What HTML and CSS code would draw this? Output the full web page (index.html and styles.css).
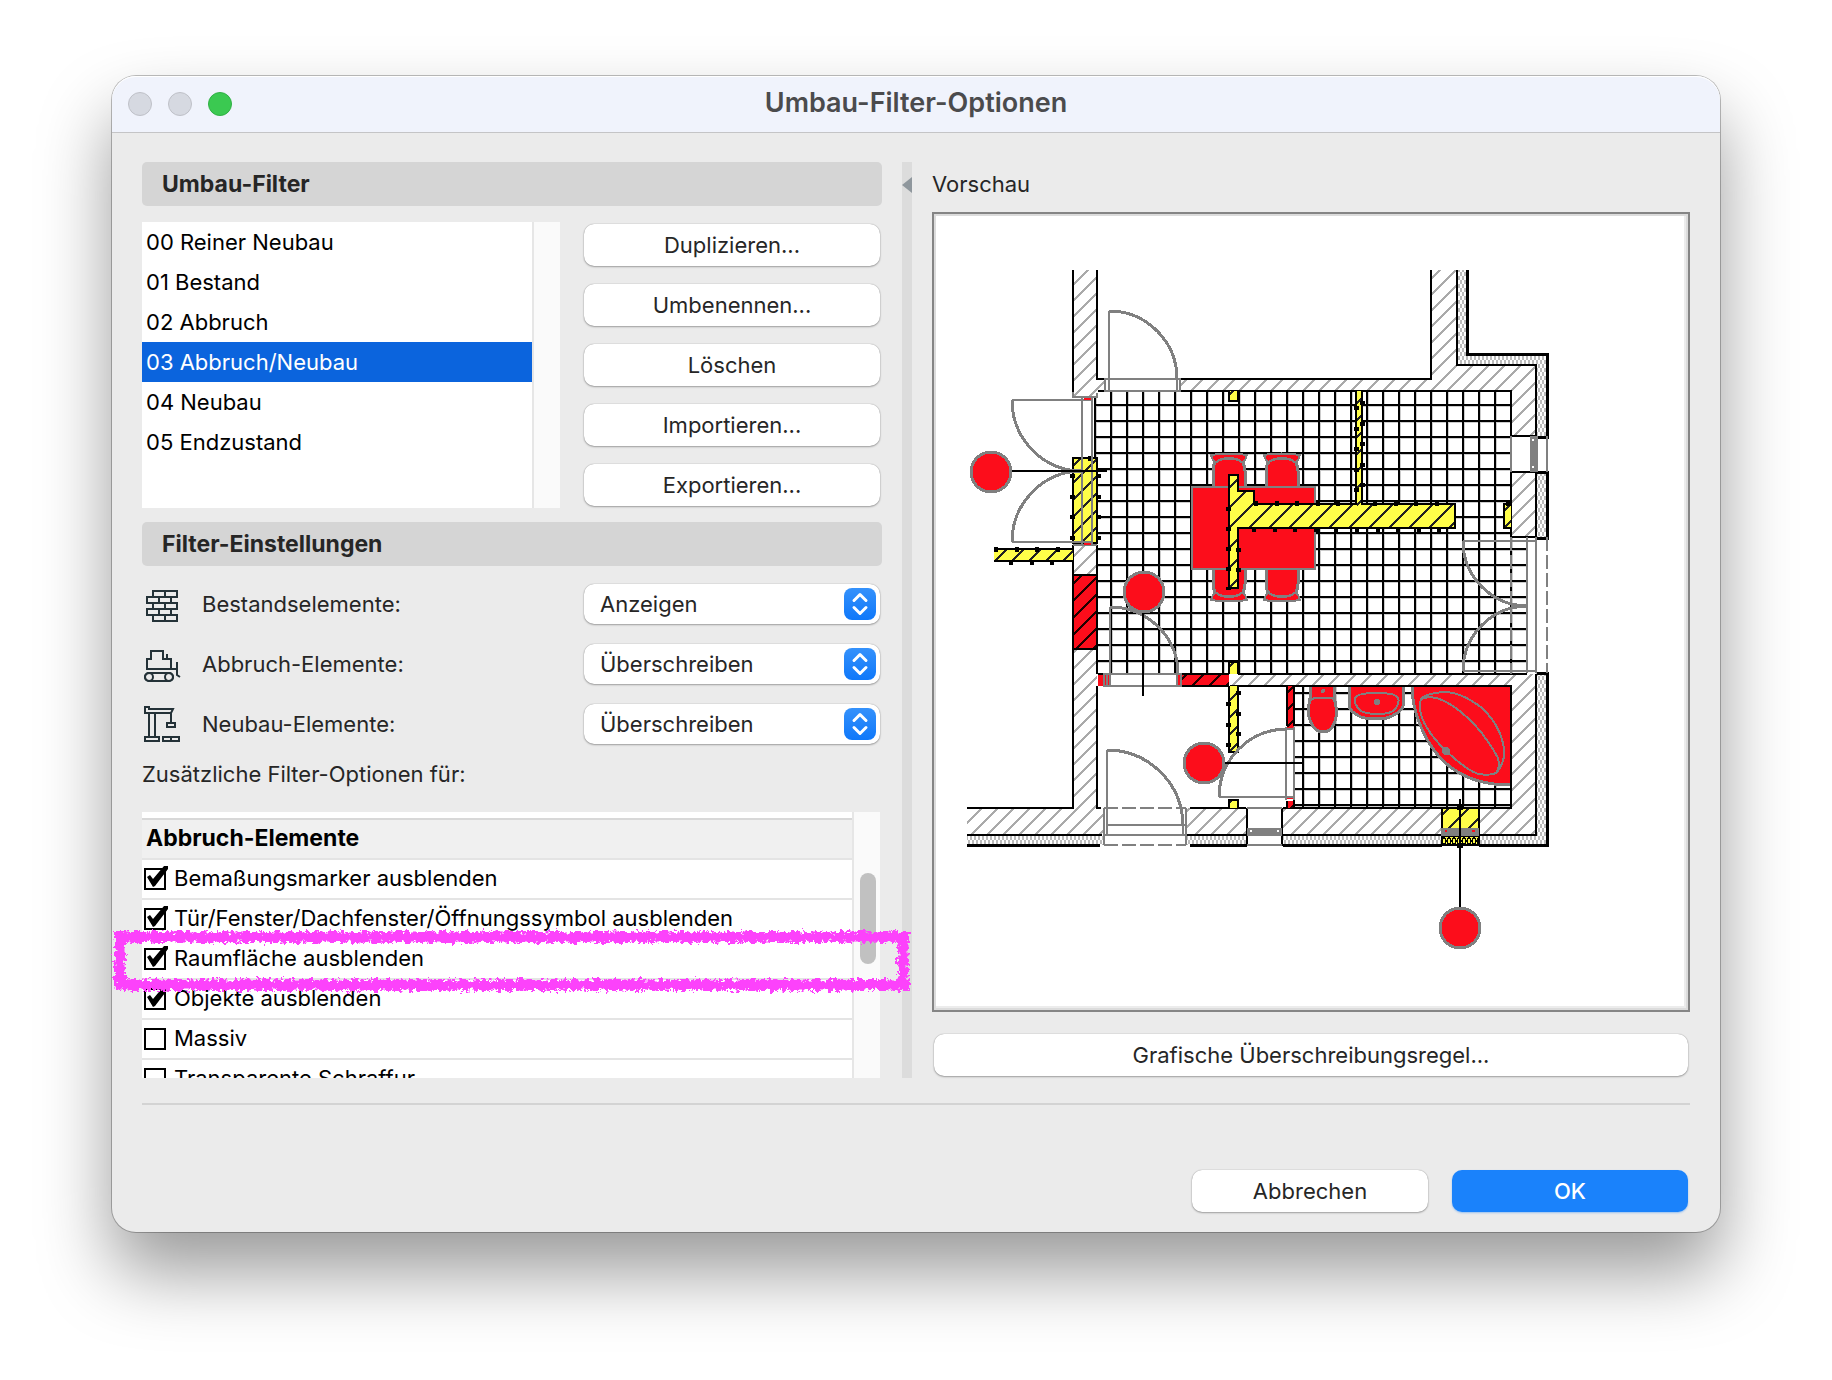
FILE: index.html
```
<!DOCTYPE html>
<html lang="de">
<head>
<meta charset="utf-8">
<meta name="viewport" content="width=device-width, initial-scale=1">
<title>Umbau-Filter-Optionen</title>
<link rel="stylesheet" href="styles.css">
</head>
<body>
<main class="window">
  <header class="titlebar">
    <div class="lights"><span class="light"></span><span class="light"></span><span class="light light-zoom"></span></div>
    <h1 class="title">Umbau-Filter-Optionen</h1>
  </header>
  <div class="content">
    <section class="settings">
      <h2 class="section-head">Umbau-Filter</h2>
      <div class="filters">
        <div class="list-frame">
          <ul class="filter-list" role="listbox" aria-label="Umbau-Filter">
            <li role="option">00 Reiner Neubau</li>
            <li role="option">01 Bestand</li>
            <li role="option">02 Abbruch</li>
            <li role="option" class="selected" aria-selected="true">03 Abbruch/Neubau</li>
            <li role="option">04 Neubau</li>
            <li role="option">05 Endzustand</li>
          </ul>
          <div class="track"></div>
        </div>
        <div class="actions">
          <button class="btn" type="button">Duplizieren...</button>
          <button class="btn" type="button">Umbenennen...</button>
          <button class="btn" type="button">Löschen</button>
          <button class="btn" type="button">Importieren...</button>
          <button class="btn" type="button">Exportieren...</button>
        </div>
      </div>
      <h2 class="section-head">Filter-Einstellungen</h2>
      <div class="rows">
        <div class="row">
          <svg class="icon" viewBox="0 0 36 40" aria-hidden="true"><path d="M9 7H33V13H9ZM3 13H27V19H3ZM9 19H33V25H9ZM3 25H27V31H3ZM9 31H33V37H9ZM21 7V13M15 13V19M21 19V25M15 25V31M21 31V37"/></svg>
          <label for="bestand">Bestandselemente:</label>
          <div class="popup">
            <select id="bestand"><option>Anzeigen</option><option>Überschreiben</option></select>
            <svg class="arrows" viewBox="0 0 32 32" aria-hidden="true"><path d="M10 12.500L16 6.500L22 12.500M10 19.500L16 25.500L22 19.500"/></svg>
          </div>
        </div>
        <div class="row">
          <svg class="icon" viewBox="0 0 36 40" aria-hidden="true"><path d="M3 25V15H7V7H19V15H27V25M23 15V10M2 25H33M33 18V31L36 33"/><rect x="1" y="29" width="28" height="8" rx="4"/><circle cx="5" cy="33" r="4"/><circle cx="25" cy="33" r="4"/></svg>
          <label for="abbruch">Abbruch-Elemente:</label>
          <div class="popup">
            <select id="abbruch"><option>Überschreiben</option><option>Anzeigen</option></select>
            <svg class="arrows" viewBox="0 0 32 32" aria-hidden="true"><path d="M10 12.500L16 6.500L22 12.500M10 19.500L16 25.500L22 19.500"/></svg>
          </div>
        </div>
        <div class="row">
          <svg class="icon" viewBox="0 0 36 40" aria-hidden="true"><path d="M1 3H5V5H29L27 9H1ZM5 9V33M11 9V33M1 33H15V37H1ZM27 9V19M23 19H31V23H23ZM19 33H35V37H19ZM27 33V37"/></svg>
          <label for="neubau">Neubau-Elemente:</label>
          <div class="popup">
            <select id="neubau"><option>Überschreiben</option><option>Anzeigen</option></select>
            <svg class="arrows" viewBox="0 0 32 32" aria-hidden="true"><path d="M10 12.500L16 6.500L22 12.500M10 19.500L16 25.500L22 19.500"/></svg>
          </div>
        </div>
      </div>
      <p class="extra">Zusätzliche Filter-Optionen für:</p>
      <div class="options">
        <div class="options-frame">
          <div class="option-list">
            <h3 class="group">Abbruch-Elemente</h3>
            <label class="option"><input type="checkbox" checked>Bemaßungsmarker ausblenden</label>
            <label class="option"><input type="checkbox" checked>Tür/Fenster/Dachfenster/Öffnungssymbol ausblenden</label>
            <label class="option"><input type="checkbox" checked>Raumfläche ausblenden</label>
            <label class="option"><input type="checkbox" checked>Objekte ausblenden</label>
            <label class="option"><input type="checkbox">Massiv</label>
            <label class="option"><input type="checkbox">Transparente Schraffur</label>
          </div>
          <div class="track"><div class="thumb"></div></div>
        </div>
        <svg class="marker" aria-hidden="true">
          <defs>
            <filter id="chalk" x="-2%" y="-20%" width="104%" height="140%">
              <feTurbulence type="fractalNoise" baseFrequency="0.26" numOctaves="3" seed="4" result="n"/>
              <feDisplacementMap in="SourceGraphic" in2="n" scale="9" xChannelSelector="R" yChannelSelector="G"/>
            </filter>
          </defs>
          <g filter="url(#chalk)">
            <rect class="marker-line" x="11" y="11" width="783" height="48"/>
            <rect class="marker-grain" x="11" y="11" width="783" height="48"/>
          </g>
        </svg>
      </div>
    </section>
    <div class="splitter"><span class="collapse"></span></div>
    <section class="preview">
      <h2 class="preview-label">Vorschau</h2>
      <div class="canvas">
        <svg class="plan" viewBox="934 214 754 796" role="img" aria-label="Grundriss">
          <defs>
            <pattern id="tiles" x="1110" y="404" width="16" height="16" patternUnits="userSpaceOnUse"><path d="M0 0H16V2H0ZM0 0H2V16H0Z" fill="#000"/><path d="M2 2H16V3H3V16H2Z" fill="#ccc"/></pattern>
            <pattern id="hatch" x="1095" y="391" width="16" height="16" patternUnits="userSpaceOnUse"><rect width="16" height="16" fill="#fff"/><path d="M-2 18L18 -2M-2 2L2 -2M14 18L18 14" stroke="#aaa" stroke-width="1.500" fill="none"/></pattern>
            <pattern id="hatch-y" x="1233" y="504" width="20" height="20" patternUnits="userSpaceOnUse"><rect width="20" height="20" fill="#fffe49"/><path d="M-2 22L22 -2M-2 2L2 -2M18 22L22 18" stroke="#222" stroke-width="2" fill="none"/></pattern>
            <pattern id="hatch-yn" x="1229" y="480" width="17" height="17" patternUnits="userSpaceOnUse"><rect width="17" height="17" fill="#fffe49"/><path d="M-2 19L19 -2M-2 2L2 -2M15 19L19 15" stroke="#222" stroke-width="1.500" fill="none"/></pattern>
            <pattern id="hatch-r" x="1073" y="584" width="17" height="17" patternUnits="userSpaceOnUse"><rect width="17" height="17" fill="#fc0d1b"/><path d="M-2 19L19 -2M-2 2L2 -2M15 19L19 15" stroke="#200" stroke-width="1.500" fill="none"/></pattern>
            <pattern id="insul" x="1457" y="354" width="8" height="8" patternUnits="userSpaceOnUse"><rect width="8" height="8" fill="#fff"/><path d="M0 0L4 8L8 0M0 8L4 0L8 8" stroke="#bbb" stroke-width="1" fill="none"/></pattern>
            <pattern id="insul-y" x="1444" y="837" width="10" height="8" patternUnits="userSpaceOnUse"><rect width="10" height="8" fill="#fffe49"/><path d="M0 0L5 8L10 0M0 8L5 0L10 8" stroke="#000" stroke-width="1.500" fill="none"/></pattern>
            <g id="chair">
              <path class="red" d="M1213 488V471Q1213 460 1222 459Q1229 457 1236 459Q1245 460 1245 471V488Z"/>
              <path class="red thin" d="M1211 455Q1229 452 1247 455Q1246 459 1243 463Q1238 458 1229 458Q1220 458 1215 463Q1212 459 1211 455Z"/>
            </g>
          </defs>

          <!-- tiled floors -->
          <path fill="url(#tiles)" d="M1094 391H1511V537H1527V674H1098V458H1094Z"/>
          <path fill="url(#tiles)" d="M1294 686H1511V807H1294Z"/>

          <!-- masonry -->
          <path fill="url(#hatch)" d="M1073 270H1097V379H1105V391H1097V397H1073ZM1180 379H1431V270H1457V365H1536V436H1511V391H1180ZM1511 472H1536V537H1511ZM1230 674H1536V835H1479V808H1511V686H1230ZM1283 808H1442V835H1283ZM1187 808H1247V835H1187ZM967 808H1073V649H1097V808H1104V835H967ZM1073 545H1097V575H1073Z"/>
          <path fill="url(#insul)" d="M1457 270H1467V354H1547V436H1536V365H1457ZM1536 472H1547V537H1536ZM1536 673H1547V845H1479V835H1536ZM1283 835H1442V845H1283ZM1187 835H1247V845H1187ZM967 835H1104V845H967Z"/>
          <path class="ink" d="M1073 270V393M1097 270V379H1104M1098 391H1104M1095 397V458M1181 379H1431V270M1181 391H1511V436H1536V365H1457V270M1511 537V472H1536V537H1511M1098 674H1104M1238 674H1527M1230 686H1511V808H1283M1283 835H1442M1479 835H1536V674M1190 808H1246M1187 835H1247M967 808H1073V545M1097 545V674M1097 686V808H1101M967 835H1102M1247 808V846M1282 808V846"/>
          <path class="ink thick" d="M1467 270V354H1547V437H1536M1536 472H1547V538H1536M1537 673H1547V845H1479M1283 845H1442M1190 845H1247M967 845H1100"/>

          <!-- furniture -->
          <use href="#chair"/><use href="#chair" x="53"/>
          <g transform="matrix(1 0 0 -1 0 1055)"><use href="#chair"/><use href="#chair" x="53"/></g>
          <rect class="red thin" x="1192" y="487" width="123" height="82"/>
          <path class="red" d="M1310 687V698Q1308 706 1309 717Q1313 732 1323 732Q1333 732 1336 717Q1337 706 1334 698V687"/>
          <path class="line" d="M1309 703Q1311 698 1316 698H1330Q1335 698 1336 703"/>
          <path class="red" d="M1349 687V706Q1350 712 1361 717Q1367 719 1377 719Q1387 719 1392 716Q1402 711 1403 706V687"/>
          <path class="line" d="M1355 698Q1357 693 1377 693Q1396 693 1398 698Q1400 703 1395 709Q1392 714 1377 714Q1363 714 1359 709Q1354 704 1355 698Z"/>
          <path fill="#fc0d1b" d="M1412 687H1510V785Q1445 785 1421 727Q1412 706 1412 687Z"/>
          <path class="line heavy" d="M1412 687Q1412 706 1421 727Q1445 785 1510 785"/>
          <path class="line" d="M1421 699Q1425 694 1442 692Q1460 691 1482 708Q1501 726 1504 749Q1505 763 1497 772Q1493 776 1478 774Q1465 769 1445 750Q1421 726 1420 708Q1420 702 1421 699ZM1421 699Q1432 694 1448 703Q1478 721 1498 758Q1500 766 1497 772"/>
          <g fill="#808080"><circle cx="1323" cy="691" r="2"/><circle cx="1377" cy="702" r="3"/><circle cx="1446" cy="751" r="4"/></g>

          <!-- new walls -->
          <g fill="url(#hatch-r)"><path d="M1073 575H1097V649H1073ZM1182 674H1229V686H1182ZM1287 686H1294V727H1287ZM1287 801H1294V808H1287Z"/><path fill="#fc0d1b" d="M1098 675H1110V686H1098ZM1177 675H1182V686H1177Z"/></g>
          <path class="ink" d="M1073 575H1097V649H1073ZM1182 674H1229M1182 686H1229M1287 686V726M1294 686V726M1287 801V808M1294 801V808M1294 731V808M1511 686V808"/>

          <!-- demolished walls -->
          <g class="ink"><path fill="url(#hatch-yn)" d="M1073 458H1097V543H1073Z"/>
          <path fill="url(#hatch-y)" d="M1229 475H1238V491H1254V504H1455V528H1238V588H1229Z"/>
          <path fill="url(#hatch-yn)" d="M1229 391V401H1238V391M1229 674V662H1238V674M1229 686V752H1238V686M1229 808V800H1238V808M1511 504H1504V528H1511"/>
          <path fill="url(#hatch-y)" d="M1442 808H1479V835H1442Z"/><path fill="url(#insul-y)" d="M1442 836H1479V845H1442Z"/></g>
          <path fill="url(#hatch-yn)" d="M994 549H1073V561H994ZM1357 391H1361V506H1357Z"/>
          <path class="ink" d="M994 549H1073M994 561H1073M1356 391V503M1362 391V503"/>
          <g class="dots">
            <path d="M1072 474V540" stroke-dasharray="4 16.600"/><path d="M1098 474V540" stroke-dasharray="4 16.600"/>
            <path d="M994 549H1060M1009 562H1060" stroke-dasharray="4 16.600"/>
            <path d="M1254 503H1345M1373 503H1442M1252 529H1444" stroke-dasharray="4 16.600"/>
            <path d="M1228 507V590M1238 548V575" stroke-dasharray="4 16"/>
            <path d="M1356 406V495M1362 401V492" stroke-dasharray="4 16.600"/>
            <path d="M1228 702V750M1238 691V740" stroke-dasharray="4 16.600"/>
            <path d="M1088 458H1093M1506 503H1511"/>
          </g>

          <!-- doors and windows -->
          <g class="line">
            <path fill="#fff" stroke="none" d="M1106 380H1179V391H1106ZM1110 675H1177V686H1110Z"/>
            <path d="M1105 379H1180V391H1105ZM1109 311V391M1177 379V391M1104 674H1181V686H1104ZM1110 607V686M1107 674V686M1177 674V686M1073 392V397H1097V393M1092 400H1012M1082 397V545M1092 397V545M1012 542H1092M1073 545H1097M1527 537V673M1536 537V673M1463 541H1536M1463 671H1536M1104 808V845M1107 750V835M1183 825V835M1186 808V845M1107 825H1186M1104 835H1186M1286 727V800M1294 727V800M1282 729H1294M1219 797H1294M1247 808H1282M1247 845H1282M1511 436V472M1547 436V472"/>
            <path class="heavy" d="M1109 311A68 68 0 0 1 1177 379M1012 400A70 71 0 0 0 1082 471A70 71 0 0 0 1012 542M1110 607A68 67 0 0 1 1178 674M1463 541A65 65 0 0 0 1528 606A65 65 0 0 0 1463 671M1107 750A76 76 0 0 1 1183 825M1219 797A68 68 0 0 1 1287 729"/>
            <path stroke-dasharray="14 4" d="M1104 808H1186M1104 845H1186M1511 537V674M1547 537V673"/>
          </g>
          <path fill="#808080" d="M1530 436H1538V472H1530ZM1247 828H1282V836H1247ZM1441 828H1479V836H1441Z"/>
          <path fill="#fff" d="M1532 439H1534V441H1532ZM1532 466H1534V468H1532ZM1250 830H1252V832H1250ZM1277 830H1279V832H1277Z"/>
          <path fill="#fc0d1b" d="M1445 830H1447V832H1445ZM1472 830H1475V832H1472ZM1084 398H1091V400H1084ZM1084 543H1091V545H1084ZM1287 727H1293V728H1287ZM1287 798H1293V799H1287Z"/>

          <!-- door markers -->
          <path class="ink" d="M1011 471H1107M1143 611V696M1224 763H1302M1460 799V908"/>
          <path d="M1457 805H1463V810H1457ZM1457 843H1463V848H1457Z"/>
          <g class="red"><circle cx="991" cy="472" r="20"/><circle cx="1144" cy="592" r="20"/><circle cx="1204" cy="763" r="20"/><circle cx="1460" cy="928" r="20"/></g>
        </svg>
      </div>
      <button class="btn" type="button">Grafische Überschreibungsregel...</button>
    </section>
  </div>
  <footer class="footer">
    <button class="btn" type="button">Abbrechen</button>
    <button class="btn btn-primary" type="submit">OK</button>
  </footer>
</main>
</body>
</html>
```
FILE: styles.css
```
* { box-sizing: border-box; }

body {
  margin: 0;
  padding: 76px 112px 148px;
  background: #fff;
  color: #262626;
  font: 22px/40px Inter, "Liberation Sans", sans-serif;
}

h1, h2, h3, p, ul { margin: 0; padding: 0; }

.window {
  background: #ebebeb;
  border-radius: 24px;
  box-shadow: 0 0 0 1px rgba(0, 0, 0, .25), 0 40px 72px rgba(0, 0, 0, .4);
}

.titlebar {
  position: relative;
  display: flex;
  align-items: center;
  justify-content: center;
  height: 57px;
  background: #f0f3fc;
  border-bottom: 1px solid #c4c4c6;
  border-radius: 24px 24px 0 0;
  box-shadow: inset 0 1px #fff;
}

.title { padding-bottom: 2px; color: #4b4b4d; font-size: 27px; font-weight: 600; }

.lights { position: absolute; left: 16px; top: 16px; display: flex; gap: 16px; }
.light { width: 24px; height: 24px; border-radius: 50%; background: #d6d9e1; border: 1px solid #bfc1c8; }
.light-zoom { background: #3bc951; border-color: #30b044; }

.content {
  display: grid;
  grid-template-columns: minmax(0, 740px) 10px minmax(0, 1fr);
  gap: 20px;
  margin: 0 30px;
  padding: 29px 0 25px;
  border-bottom: 2px solid #d3d3d3;
}

.section-head {
  height: 44px;
  padding-left: 20px;
  background: #d5d5d5;
  border-radius: 5px;
  font-size: 23px;
  line-height: 44px;
  font-weight: 700;
}

.filters { display: flex; gap: 24px; padding: 16px 2px 14px 0; }

.list-frame { display: flex; flex: 1; height: 286px; background: #fff; color: #000; }
.filter-list { flex: 1; list-style: none; }
.filter-list li { padding-left: 4px; }
.filter-list .selected { background: #0b64dd; color: #fff; }

.track { flex: none; width: 28px; background: #fafafa; border-left: 2px solid #e6e6e6; }
.thumb { width: 16px; height: 91px; margin: 61px 0 0 6px; border-radius: 8px; background: #c1c1c1; }

.actions { display: flex; flex-direction: column; gap: 18px; width: 296px; padding-top: 2px; }

.btn {
  height: 42px;
  padding: 0;
  border: 0;
  border-radius: 10px;
  background: #fff;
  color: #262626;
  font: inherit;
  box-shadow: 0 0 1px rgba(0, 0, 0, .4), 0 1px 2px rgba(0, 0, 0, .3);
}

.rows { display: flex; flex-direction: column; gap: 20px; padding: 18px 2px 0; }
.row { display: flex; align-items: center; }
.row label { flex: 1; margin-left: 22px; line-height: 40px; }
.icon { width: 36px; height: 40px; fill: none; stroke: #243238; stroke-width: 2; overflow: visible; }

.popup { position: relative; width: 296px; height: 40px; }
.popup select {
  width: 100%;
  height: 40px;
  padding: 0 40px 0 16px;
  border: 0;
  border-radius: 10px;
  background: #fff;
  color: #262626;
  font: inherit;
  appearance: none;
  box-shadow: 0 0 1px rgba(0, 0, 0, .4), 0 1px 2px rgba(0, 0, 0, .3);
}
.arrows {
  position: absolute;
  right: 4px;
  top: 4px;
  width: 32px;
  height: 32px;
  border-radius: 8px;
  background: linear-gradient(#3491fb, #0f78fa);
  fill: none;
  stroke: #fff;
  stroke-width: 3;
  stroke-linecap: round;
  stroke-linejoin: round;
  pointer-events: none;
}

.extra { padding: 10px 0 18px; }

.options { position: relative; }
.options-frame { display: flex; height: 266px; margin-right: 2px; overflow: hidden; background: #fff; color: #000; }
.option-list { flex: 1; padding-top: 6px; }
.group {
  height: 42px;
  padding-left: 4px;
  background: #f0f0f0;
  border-top: 2px solid #d8d8d8;
  border-bottom: 2px solid #e4e4e4;
  font-size: 23px;
  font-weight: 700;
  line-height: 36px;
}
.option {
  display: flex;
  gap: 8px;
  height: 40px;
  padding-left: 2px;
  border-bottom: 2px solid #e4e4e4;
  line-height: 36px;
}
.option input {
  position: relative;
  width: 22px;
  height: 22px;
  margin: 8px 0 0;
  border: 2px solid #000;
  background: #fff;
  appearance: none;
}
.option input:checked::after {
  content: "";
  position: absolute;
  left: -2px;
  top: -4px;
  width: 24px;
  height: 22px;
  background: #000;
  clip-path: polygon(3px 11px, 6px 9px, 9px 13px, 20px 0, 24px 0, 24px 3px, 11px 20px, 9px 21px);
}

.marker { position: absolute; left: -33px; top: 114px; width: 806px; height: 70px; pointer-events: none; }
.marker-line { fill: none; stroke: #fc43fb; stroke-width: 9; }
.marker-grain { fill: none; stroke: #fc43fb; stroke-width: 12; stroke-dasharray: 5 2 1 3 9 2; }

.splitter { background: #dcdcdc; }
.collapse { display: block; width: 10px; height: 16px; margin-top: 15px; background: #8f979d; clip-path: polygon(0 50%, 100% 0, 100% 100%); }

.preview { display: flex; flex-direction: column; }
.preview-label { height: 50px; font-size: 22px; font-weight: 400; line-height: 44px; }
.canvas {
  border: 2px solid #858585;
  background: #fff;
  box-shadow: inset 2px 2px #dcdcdc, inset -2px -2px #dcdcdc, inset -4px -4px #ececec;
}
.preview .btn { margin: 22px 2px 2px; }

.plan { display: block; width: 100%; height: auto; shape-rendering: crispEdges; }
.plan .ink { stroke: #000; stroke-width: 2; fill: none; }
.plan .thick { stroke-width: 3; }
.plan .line { stroke: #808080; stroke-width: 2; fill: none; }
.plan .heavy { stroke-width: 3; }
.plan .red { fill: #fc0d1b; stroke: #808080; stroke-width: 3; }
.plan .thin { stroke-width: 2; }
.plan .dots { stroke: #000; stroke-width: 5; fill: none; }

.footer { display: flex; justify-content: flex-end; gap: 24px; padding: 65px 32px 20px; }
.footer .btn { width: 236px; }
.footer .btn-primary { background: #1a82fb; color: #fff; font-weight: 500; box-shadow: 0 1px 2px rgba(26, 130, 251, .4); }
```
